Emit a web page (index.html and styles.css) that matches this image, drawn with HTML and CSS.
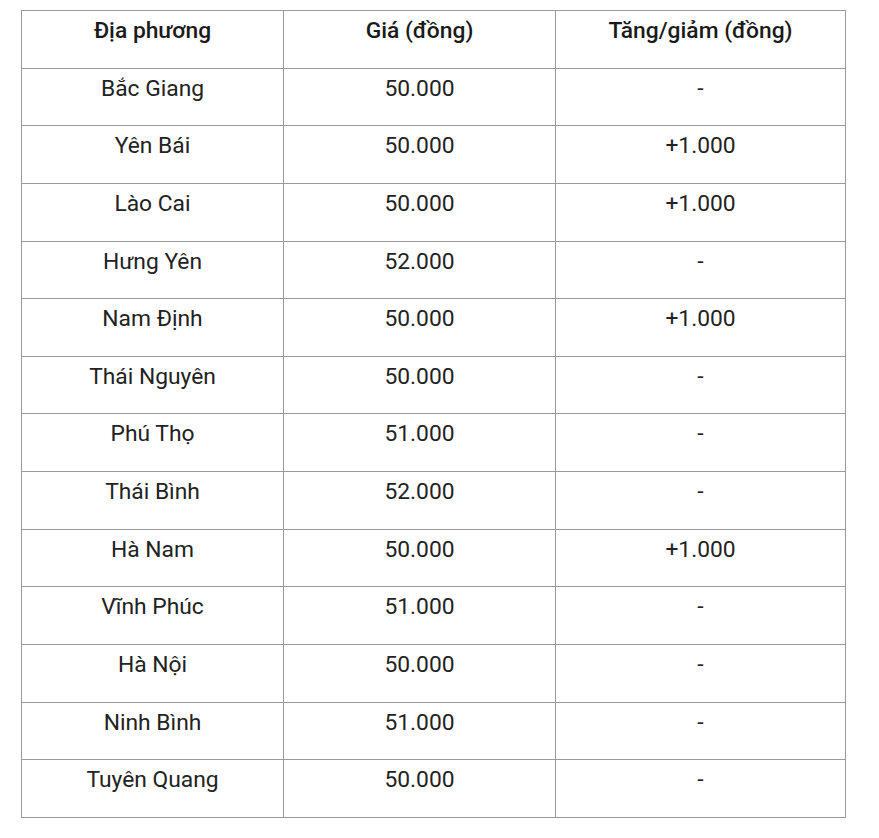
FILE: index.html
```html
<!DOCTYPE html>
<html lang="vi">
<head>
<meta charset="utf-8">
<link rel="stylesheet" href="styles.css">
</head>
<body>
<table class="price-table">
  <colgroup>
    <col class="c1"><col class="c2"><col class="c3">
  </colgroup>
  <thead>
    <tr><th>Địa phương</th><th>Giá (đồng)</th><th>Tăng/giảm (đồng)</th></tr>
  </thead>
  <tbody>
    <tr><td>Bắc Giang</td><td>50.000</td><td>-</td></tr>
    <tr><td>Yên Bái</td><td>50.000</td><td>+1.000</td></tr>
    <tr><td>Lào Cai</td><td>50.000</td><td>+1.000</td></tr>
    <tr><td>Hưng Yên</td><td>52.000</td><td>-</td></tr>
    <tr><td>Nam Định</td><td>50.000</td><td>+1.000</td></tr>
    <tr><td>Thái Nguyên</td><td>50.000</td><td>-</td></tr>
    <tr><td>Phú Thọ</td><td>51.000</td><td>-</td></tr>
    <tr><td>Thái Bình</td><td>52.000</td><td>-</td></tr>
    <tr><td>Hà Nam</td><td>50.000</td><td>+1.000</td></tr>
    <tr><td>Vĩnh Phúc</td><td>51.000</td><td>-</td></tr>
    <tr><td>Hà Nội</td><td>50.000</td><td>-</td></tr>
    <tr><td>Ninh Bình</td><td>51.000</td><td>-</td></tr>
    <tr><td>Tuyên Quang</td><td>50.000</td><td>-</td></tr>
  </tbody>
</table>
</body>
</html>
```
FILE: styles.css
```css
html, body {
  margin: 0;
  padding: 0;
  background: #fff;
}
body {
  font-family: Roboto, "Noto Sans", sans-serif;
  color: #222;
  padding: 10px 0 0 21px;
}
.price-table {
  border-collapse: collapse;
  width: 824px;
  table-layout: fixed;
}
.c1 { width: 262px; }
.c2 { width: 272px; }
.c3 { width: 290px; }
.price-table tr {
  height: 57.64px;
}
.price-table th,
.price-table td {
  border: 1px solid #9a9a9a;
  text-align: center;
  vertical-align: top;
  padding: 6px 8px 0;
  font-size: 22.8px;
  line-height: 28px;
  box-sizing: border-box;
}
.price-table th {
  font-weight: 500;
  color: #1a1a1a;
}
```
